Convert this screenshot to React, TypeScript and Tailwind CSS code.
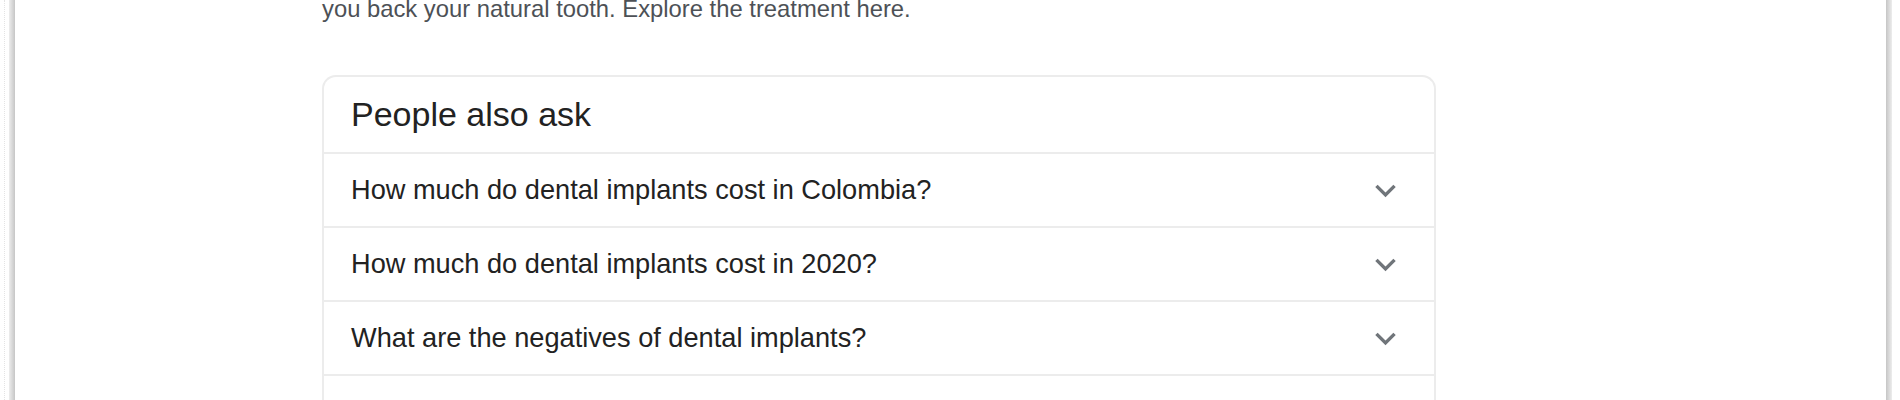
const questions = [
  'How much do dental implants cost in Colombia?',
  'How much do dental implants cost in 2020?',
  'What are the negatives of dental implants?',
  '',
];

function Chevron() {
  return (
    <svg viewBox="0 0 24 24" className="h-[41px] w-[41px] shrink-0" fill="#70757a">
      <path d="M16.59 8.59L12 13.17 7.41 8.59 6 10l6 6 6-6z" />
    </svg>
  );
}

export default function App() {
  return (
    <div className="flex h-[400px] w-full overflow-hidden bg-white font-['Liberation_Sans',Arial,sans-serif]">
      <div className="w-[9px] shrink-0">
        <div className="h-full w-[5px] border-r border-dotted border-[#e4e4e4]" />
      </div>
      <div className="w-[6px] shrink-0 bg-linear-to-r from-[#ededed] to-[#c6c6c6]" />

      <main className="min-w-0 flex-1 pl-[307px]">
        <p className="-mt-[10px] text-[23.8px] leading-[38px] text-[#4d5156]">
          you back your natural tooth. Explore the treatment here.
        </p>

        <div className="mt-[47px] w-[1114px] rounded-t-[14px] border-2 border-b-0 border-[#ececec]">
          <div className="flex h-[75px] items-center px-[27px] text-[34px] text-[#222]">
            People also ask
          </div>
          {questions.map((q, i) => (
            <div
              key={i}
              className="flex h-[74px] items-center justify-between border-t-2 border-[#ececec] pl-[27px] pr-[28px]"
            >
              <span className="text-[27.2px] text-[#222]">{q}</span>
              {q && <Chevron />}
            </div>
          ))}
        </div>
      </main>

      <div className="w-[6px] shrink-0 bg-linear-to-l from-[#ededed] to-[#c6c6c6]" />
      <div className="w-[8px] shrink-0" />
    </div>
  );
}
